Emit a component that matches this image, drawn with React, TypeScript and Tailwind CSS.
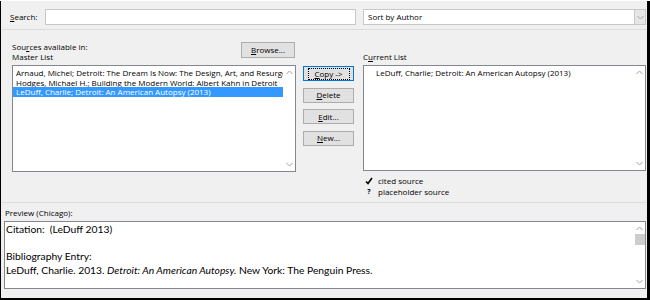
import React from 'react';

const ui = { fontFamily: '"Open Sans", "Noto Sans", sans-serif' };
const cal = { fontFamily: 'Lato, "Open Sans", sans-serif' };

const Chevron = ({ up = false }: { up?: boolean }) => (
    <svg width="7" height="5" viewBox="0 0 7 5" className="block">
        <polyline
            points={up ? '0.5,4 3.5,1 6.5,4' : '0.5,1 3.5,4 6.5,1'}
            fill="none"
            stroke="#a0a0a0"
            strokeWidth="1"
        />
    </svg>
);

const Btn = ({ k, rest, focused = false }: { k: string; rest: string; focused?: boolean }) => (
    <div
        className={`h-[15px] w-[51px] flex items-center justify-center text-[8px] text-black bg-[#e1e1e1] border ${
            focused ? 'border-[#0078d7]' : 'border-[#adadad]'
        }`}
        style={ui}
    >
        <span className={`leading-none px-[6px] py-[1px] ${focused ? 'outline outline-1 outline-dotted outline-black' : ''}`}>
            <span className="underline">{k}</span>
            {rest}
        </span>
    </div>
);

export default function App() {
    return (
        <div className="w-[650px] h-[300px] bg-black">
            <div className="ml-[1px] mt-[1px] w-[646px] h-[297px] bg-[#f0f0f0] flex flex-col text-black" style={ui}>
                {/* search row */}
                <div className="flex items-center pt-[8px] h-[24px]">
                    <span className="w-[44px] pl-[9px] text-[8px] leading-none">
                        <span className="underline">S</span>earch:
                    </span>
                    <div className="w-[311px] h-[16px] bg-white border border-[#c8c8c8]" />
                    <div className="ml-[7px] w-[283px] h-[16px] bg-white border border-[#c8c8c8] flex items-center">
                        <span className="pl-[4px] text-[8px] leading-none flex-1">Sort by Author</span>
                        <div className="w-[11px] h-[14px] bg-[#e6e6e6] border-l border-[#c8c8c8] flex items-center justify-center">
                            <Chevron />
                        </div>
                    </div>
                </div>
                <div className="mt-[4px] h-[1px] bg-[#dcdcdc]" />

                {/* middle */}
                <div className="flex h-[172px]">
                    <div className="ml-[11px] w-[284px] flex flex-col">
                        <div className="h-[35px] flex justify-between">
                            <div className="pt-[12px] text-[8px] leading-[10px]">
                                <div>
                                    Sou<span className="underline">r</span>ces available in:
                                </div>
                                <div>Master List</div>
                            </div>
                            <div className="mt-[12px] mr-[1px] w-[54px] h-[16px] bg-[#e1e1e1] border border-[#adadad] flex items-center justify-center text-[8px] leading-none">
                                <span>
                                    <span className="underline">B</span>rowse...
                                </span>
                            </div>
                        </div>
                        <div className="h-[107px] bg-white border border-[#828790] flex">
                            <div className="flex-1 min-w-0 overflow-hidden pt-[2px] text-[8px] leading-[9.5px]">
                                <div className="pl-[3px] whitespace-nowrap overflow-hidden">
                                    Arnaud, Michel; Detroit: The Dream Is Now: The Design, Art, and Resurgence of an American City
                                </div>
                                <div className="pl-[3px] whitespace-nowrap overflow-hidden">
                                    Hodges, Michael H.; Building the Modern World: Albert Kahn in Detroit
                                </div>
                                <div className="pl-[3px] whitespace-nowrap overflow-hidden bg-[#3399ff] text-white">
                                    LeDuff, Charlie; Detroit: An American Autopsy (2013)
                                </div>
                            </div>
                            <div className="w-[12px] shrink-0 flex flex-col justify-between items-center py-[4px]">
                                <Chevron up />
                                <Chevron />
                            </div>
                        </div>
                    </div>

                    <div className="ml-[7px] pt-[36px] flex flex-col gap-[6.5px]">
                        <Btn k="C" rest="opy ->" focused />
                        <Btn k="D" rest="elete" />
                        <Btn k="E" rest="dit..." />
                        <Btn k="N" rest="ew..." />
                    </div>

                    <div className="ml-[9px] w-[283px] flex flex-col">
                        <div className="h-[35px] flex items-end pb-[3px] text-[8px] leading-[10px]">
                            <span>
                                C<span className="underline">u</span>rrent List
                            </span>
                        </div>
                        <div className="h-[106px] bg-white border border-[#828790] flex">
                            <div className="flex-1 min-w-0 overflow-hidden pt-[2px] pl-[12px] text-[8px] leading-[9.5px] whitespace-nowrap">
                                LeDuff, Charlie; Detroit: An American Autopsy (2013)
                            </div>
                            <div className="w-[11px] shrink-0 flex flex-col justify-between items-center py-[4px]">
                                <Chevron up />
                                <Chevron />
                            </div>
                        </div>
                        <div className="mt-[4px] pl-[2px] text-[8px] leading-[11px]">
                            <div className="flex items-center">
                                <svg width="8" height="8" viewBox="0 0 8 8" className="mr-[5px]">
                                    <path d="M1 4.5 L3 6.5 L7 1" fill="none" stroke="#000" strokeWidth="1.6" />
                                </svg>
                                cited source
                            </div>
                            <div className="flex items-center">
                                <span className="w-[8px] mr-[5px] text-center font-bold text-[7px]">?</span>
                                placeholder source
                            </div>
                        </div>
                    </div>
                </div>

                <div className="h-[1px] bg-[#dcdcdc]" />
                <div className="pl-[4px] pt-[5px] h-[18px] text-[8px] leading-[10px]">Preview (Chicago):</div>
                <div className="ml-[3px] w-[642px] h-[68px] bg-white border border-[#828790] flex" style={cal}>
                    <div className="flex-1 min-w-0 pl-[1px] pt-[1px] text-[10.3px] leading-[13.5px] whitespace-nowrap">
                        <div>Citation:&nbsp; (LeDuff 2013)</div>
                        <div>&nbsp;</div>
                        <div>Bibliography Entry:</div>
                        <div>
                            LeDuff, Charlie. 2013. <i>Detroit: An American Autopsy.</i> New York: The Penguin Press.
                        </div>
                    </div>
                    <div className="w-[11px] shrink-0 flex flex-col items-center py-[4px]">
                        <Chevron up />
                        <div className="mt-[3px] w-[10px] h-[11px] bg-[#cdcdcd]" />
                        <div className="flex-1" />
                        <Chevron />
                    </div>
                </div>
            </div>
        </div>
    );
}
